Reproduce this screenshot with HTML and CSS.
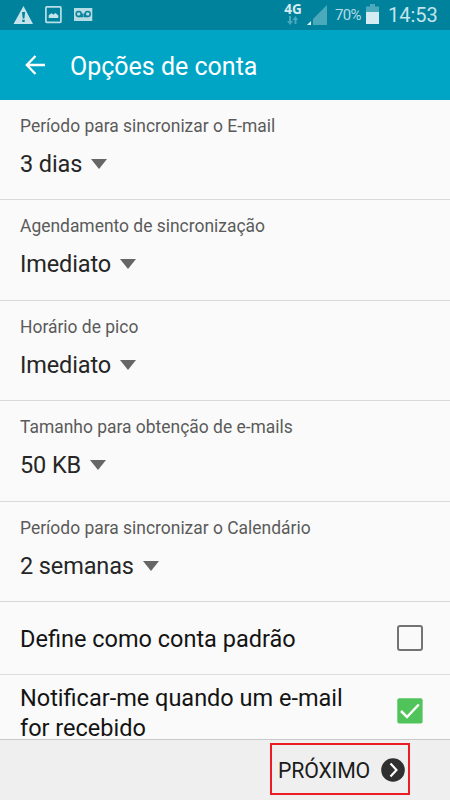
FILE: index.html
```html
<!DOCTYPE html>
<html lang="pt-BR">
<head>
<meta charset="utf-8">
<title>Opções de conta</title>
<link rel="stylesheet" href="styles.css">
</head>
<body>
<div class="screen">
  <div class="status">
    <svg class="notices" width="100" height="30" viewBox="0 0 100 30">
      <path fill="#c4e3ea" fill-rule="evenodd" d="M23.5 6 33 24H13.500zM22 12l.7 6.500h1.700l.7-6.500zM22.300 19.800v2.200h2.400v-2.200z"/>
      <rect x="45.900" y="6.900" width="15" height="15.500" rx=".8" fill="none" stroke="#b9dee7" stroke-width="1.700"/>
      <path fill="#c4e3ea" d="M48.700 18v-2.700l2.700-2 2 1.300 2.200-1.700 2.700 2.700V18z"/>
      <path fill="#b4dce5" d="M74 8h18.300v13H74z"/>
      <g fill="none" stroke="#078299" stroke-width="1.500"><circle cx="78.700" cy="14" r="2.500"/><circle cx="87.700" cy="14" r="2.500"/><path d="M78.500 16.500h3.700v-3M87.700 16.500h-3.500v-3"/></g>
    </svg>
    <div class="network">
      <span>4G</span>
      <svg width="12" height="9" viewBox="0 0 12 9"><path fill="#4aa9bb" d="M2 0h2v5h2L3 9 0 5h2zM7.500 8V4h-2L8.500 0l2.500 4H9.500v4z"/></svg>
    </div>
    <svg class="signal" width="21" height="21" viewBox="0 0 21 21"><path fill="#4aa9bb" d="M20 0v20H6V14z"/><path fill="#e1f3f6" d="M4 16v4H0z"/></svg>
    <span class="percent">70%</span>
    <svg class="battery" width="13" height="20" viewBox="0 0 13 20"><path fill="#4aa9bb" d="M4 0h5v2.500h4V8H0V2.500h4z"/><path fill="#d5edf2" d="M0 8h13v12H0z"/></svg>
    <span class="clock">14:53</span>
  </div>
  <header class="appbar">
    <svg width="22" height="22" viewBox="0 0 22 22"><path fill="none" stroke="#fff" stroke-width="2.300" d="M10.500 2 1.800 11l8.700 9M2 11h18"/></svg>
    <h1>Opções de conta</h1>
  </header>
  <main class="list">
    <section class="row"><div class="label">Período para sincronizar o E-mail</div><div class="value"><span>3 dias</span><i class="arrow"></i></div></section>
    <section class="row tall"><div class="label">Agendamento de sincronização</div><div class="value"><span>Imediato</span><i class="arrow"></i></div></section>
    <section class="row"><div class="label">Horário de pico</div><div class="value"><span>Imediato</span><i class="arrow"></i></div></section>
    <section class="row tall"><div class="label">Tamanho para obtenção de e-mails</div><div class="value"><span>50 KB</span><i class="arrow"></i></div></section>
    <section class="row"><div class="label">Período para sincronizar o Calendário</div><div class="value"><span>2 semanas</span><i class="arrow"></i></div></section>
    <section class="check"><span>Define como conta padrão</span><i class="box"></i></section>
    <section class="check last"><span>Notificar-me quando um e-mail<br>for recebido</span>
      <svg class="checked" width="26" height="26" viewBox="0 0 26 26"><rect x=".3" y=".3" width="25.300" height="25.300" rx="2" fill="#50c35a"/><path d="m4 13 6 6L21.800 6.500" fill="none" stroke="#fff" stroke-width="2.500"/></svg>
    </section>
  </main>
  <footer class="footer">
    <div class="next"><span>PRÓXIMO</span><svg width="24" height="24" viewBox="0 0 24 24"><circle cx="12" cy="12" r="11.800" fill="#303030"/><path d="m9.500 5.500 6 6.500-6 6.500" fill="none" stroke="#fff" stroke-width="2.100"/></svg></div>
  </footer>
</div>
</body>
</html>
```
FILE: styles.css
```css
* { box-sizing: border-box; }
body { margin: 0; font-family: Roboto, sans-serif; }
.screen { width: 450px; height: 800px; display: flex; flex-direction: column; background: #fafafa; overflow: hidden; }
.status { height: 30px; display: flex; background: #00829c; color: #d5edf2; flex: none; }
.notices { margin-right: 183px; }
.network { width: 20px; margin-top: 3px; display: flex; flex-direction: column; align-items: center; font: 700 13.5px/12px "Noto Sans", sans-serif; gap: 1px; }
.signal { margin: 5px 0 0 4px; }
.percent { width: 31px; margin-left: 7px; font-size: 15px; line-height: 31px; letter-spacing: -.7px; color: #b5dde5; }
.battery { margin-top: 4px; }
.clock { margin-left: 9px; font-size: 20px; line-height: 31px; white-space: nowrap; color: #c4e5ec; }
.appbar { height: 70px; flex: none; background: #00a5c6; color: #fff; display: flex; align-items: center; padding-left: 25px; gap: 23px; }
.appbar h1 { margin: 3px 0 0; font-size: 25px; font-weight: 400; line-height: 30px; white-space: nowrap; }
.list { height: 639px; flex: none; }
.row { height: 100px; border-bottom: 1px solid #d9d9d9; padding: 15px 20px 0; }
.row.tall { height: 101px; }
.label { font-size: 17.45px; line-height: 22px; color: #5a5a5a; white-space: nowrap; }
.value { display: flex; align-items: center; gap: 9px; margin-top: 12px; height: 30px; font-size: 23.5px; letter-spacing: -.12px; line-height: 30px; color: #262626; white-space: nowrap; }
.arrow { width: 0; height: 0; border: 8px solid transparent; border-top: 10px solid #666; border-bottom: 0; }
.check { height: 73px; border-bottom: 1px solid #dedede; padding: 2px 27px 0 20px; display: flex; align-items: center; justify-content: space-between; font-size: 23.5px; line-height: 30px; color: #141414; white-space: nowrap; }
.box { width: 26px; height: 26px; border: 2px solid #737373; border-radius: 3px; margin-bottom: 2px; }
.check.last { height: 65px; border: 0; padding-top: 10px; }
.checked { margin-bottom: 4px; }
.footer { height: 61px; flex: none; background: #efefef; border-top: 1px solid #c9c9c9; display: flex; justify-content: flex-end; align-items: flex-start; padding: 3px 40px 0 0; }
.next { width: 140px; height: 52px; border: 2px solid #ed1c24; display: flex; align-items: center; justify-content: space-between; padding: 2px 3px 0 6px; font-size: 21.3px; letter-spacing: -.2px; color: #1c1c1c; white-space: nowrap; }
```
